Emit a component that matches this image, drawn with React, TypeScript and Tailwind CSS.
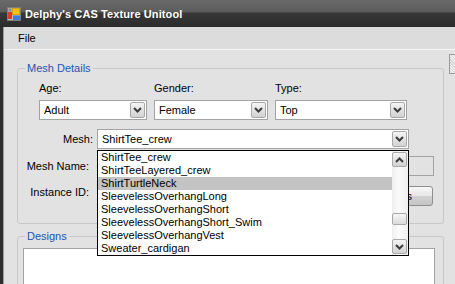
import React from 'react';

const Chevron = ({ up = false }: { up?: boolean }) => (
  <svg width="9" height="6" viewBox="0 0 9 6">
    <polyline
      points={up ? '1,5 4.5,1.5 8,5' : '1,1 4.5,4.5 8,1'}
      fill="none"
      stroke="#3b3b3b"
      strokeWidth="2"
    />
  </svg>
);

const DropBtn = () => (
  <div className="w-[15px] h-full flex items-center justify-center border border-[#a9a9a9] rounded-[2px] bg-[linear-gradient(to_bottom,#f4f4f4,#d2d2d2)]">
    <Chevron />
  </div>
);

const Combo = ({ value, w }: { value: string; w: string }) => (
  <div className={`${w} h-[20px] bg-white border border-[#a3a3a3] flex items-stretch p-[1px]`}>
    <div className="flex-1 pl-[3px] leading-[16px] whitespace-nowrap overflow-hidden">{value}</div>
    <DropBtn />
  </div>
);

const items = [
  'ShirtTee_crew',
  'ShirtTeeLayered_crew',
  'ShirtTurtleNeck',
  'SleevelessOverhangLong',
  'SleevelessOverhangShort',
  'SleevelessOverhangShort_Swim',
  'SleevelessOverhangVest',
  'Sweater_cardigan',
];

const AppIcon = () => (
  <svg width="14" height="14" viewBox="0 0 14 14">
    <rect x="0.5" y="0.5" width="13" height="13" fill="#bdbdbd" stroke="#7d7d7d" />
    <rect x="1.5" y="1.5" width="3" height="3" fill="#8a8a8a" />
    <rect x="5" y="1" width="8" height="7" fill="#f3c21b" />
    <rect x="5.5" y="1.5" width="7" height="6" fill="none" stroke="#d9a000" strokeWidth="1" />
    <rect x="1" y="5" width="4" height="7" fill="#d93a2b" />
    <rect x="6" y="8.5" width="7" height="4.5" fill="#3f7fd6" />
  </svg>
);

export default function App() {
  return (
    <div className="w-[455px] h-[284px] overflow-hidden relative bg-[#e2e2e2] font-['Liberation_Sans',Arial,sans-serif] text-[11px] text-black">
      {/* Title bar */}
      <div className="h-[27px] flex items-center bg-[linear-gradient(to_bottom,#6a6a6a_0%,#5c5c5c_44%,#383838_48%,#2b2b2b_100%)]">
        <div className="ml-[7px] flex">
          <AppIcon />
        </div>
        <div className="ml-[4px] pt-[2px] text-white font-bold text-[11px] tracking-[0.1px] leading-[13px] whitespace-nowrap">
          Delphy&apos;s CAS Texture Unitool
        </div>
      </div>

      <div className="flex h-[257px] w-[455px] overflow-hidden">
        {/* left frame */}
        <div className="w-[3px] shrink-0 bg-[#2f2f2f]" />
        <div className="w-[1px] shrink-0 bg-[#9c9c9c]" />

        <div className="flex-1 min-w-0 flex flex-col">
          {/* Menu */}
          <div className="h-[22px] shrink-0 bg-[#dcdcdc] flex items-center pl-[14px] leading-[13px]">File</div>
          <div className="h-[1px] shrink-0 bg-[#f6f6f6]" />

          <div className="flex flex-1 min-h-0 pl-[13px]">
            <div className="w-[427px] shrink-0 flex flex-col">
              {/* Mesh Details */}
              <div className="relative mt-[18px] h-[156px] shrink-0 border border-[#c8c8c8] rounded-[3px] flex flex-col">
                <div className="absolute left-[7px] -top-[7px] px-[2px] bg-[#e2e2e2] text-[#2356ad] leading-[13px]">
                  Mesh Details
                </div>
                <div className="flex gap-[7px] pl-[21px] pt-[13px]">
                  <div className="flex flex-col">
                    <div className="h-[13px] leading-[13px]">Age:</div>
                    <div className="mt-[5px]">
                      <Combo value="Adult" w="w-[108px]" />
                    </div>
                  </div>
                  <div className="flex flex-col">
                    <div className="h-[13px] leading-[13px]">Gender:</div>
                    <div className="mt-[5px]">
                      <Combo value="Female" w="w-[114px]" />
                    </div>
                  </div>
                  <div className="flex flex-col">
                    <div className="h-[13px] leading-[13px]">Type:</div>
                    <div className="mt-[5px]">
                      <Combo value="Top" w="w-[132px]" />
                    </div>
                  </div>
                </div>

                <div className="flex items-center mt-[9px]">
                  <div className="w-[75px] text-right leading-[13px]">Mesh:</div>
                  <div className="ml-[4px]">
                    <Combo value="ShirtTee_crew" w="w-[312px]" />
                  </div>
                </div>

                <div className="flex items-center mt-[7px]">
                  <div className="w-[71px] text-right leading-[13px]">Mesh Name:</div>
                  <div className="ml-[8px] mr-[9px] flex-1 h-[20px] border border-[#a3a3a3]" />
                </div>

                <div className="flex items-start mt-[6px]">
                  <div className="w-[71px] h-[20px] flex items-center justify-end leading-[13px]">Instance ID:</div>
                  <div className="ml-[8px] flex-1 h-[20px] border border-[#a3a3a3] bg-white" />
                  <div className="ml-[6px] mr-[10px] mt-[4px] w-[100px] shrink-0 h-[20px] border border-[#8e8e8e] rounded-[3px] bg-[linear-gradient(to_bottom,#f7f7f7,#e6e6e6_50%,#d2d2d2_51%,#c4c4c4)] flex items-center justify-center leading-[13px] whitespace-nowrap">
                    Get Hashes
                  </div>
                </div>
              </div>

              {/* Designs */}
              <div className="relative mt-[12px] flex-1 border border-[#c8c8c8] rounded-[3px] flex flex-col">
                <div className="absolute left-[7px] -top-[7px] px-[2px] bg-[#e2e2e2] text-[#2356ad] leading-[13px]">
                  Designs
                </div>
                <div className="ml-[5px] mr-[8px] mt-[11px] h-[80px] bg-white border border-[#a3a3a3]" />
              </div>
            </div>

            <div className="ml-[5px] mt-[4px] w-[6px] shrink-0 h-[20px] border-l border-y border-[#9a9a9a] bg-[repeating-linear-gradient(45deg,#f0f0f0_0,#f0f0f0_1px,#d6d6d6_1px,#d6d6d6_2px)]" />
          </div>
        </div>
      </div>

      {/* Open dropdown list */}
      <div className="absolute left-[97px] top-[150px] w-[312px] h-[106px] border border-black bg-white flex">
        <div className="w-[294px] flex flex-col">
          {items.map((it, i) => (
            <div
              key={it}
              className={`h-[13px] leading-[13px] pl-[3px] whitespace-nowrap overflow-hidden ${
                i === 2 ? 'bg-[#c3c3c3]' : ''
              }`}
            >
              {it}
            </div>
          ))}
        </div>
        <div className="w-[16px] flex flex-col py-[1px] bg-[linear-gradient(to_right,#eeeeee,#fbfbfb_40%,#f0f0f0)]">
          <div className="h-[15px] w-[15px] flex items-center justify-center border border-[#a9a9a9] rounded-[2px] bg-[linear-gradient(to_bottom,#f4f4f4,#d2d2d2)]">
            <Chevron up />
          </div>
          <div className="mt-[46px] h-[12px] w-[15px] border border-[#a9a9a9] rounded-[2px] bg-[linear-gradient(to_bottom,#f7f7f7,#dadada)]" />
          <div className="mt-auto h-[15px] w-[15px] flex items-center justify-center border border-[#a9a9a9] rounded-[2px] bg-[linear-gradient(to_bottom,#f4f4f4,#d2d2d2)]">
            <Chevron />
          </div>
        </div>
      </div>
    </div>
  );
}
